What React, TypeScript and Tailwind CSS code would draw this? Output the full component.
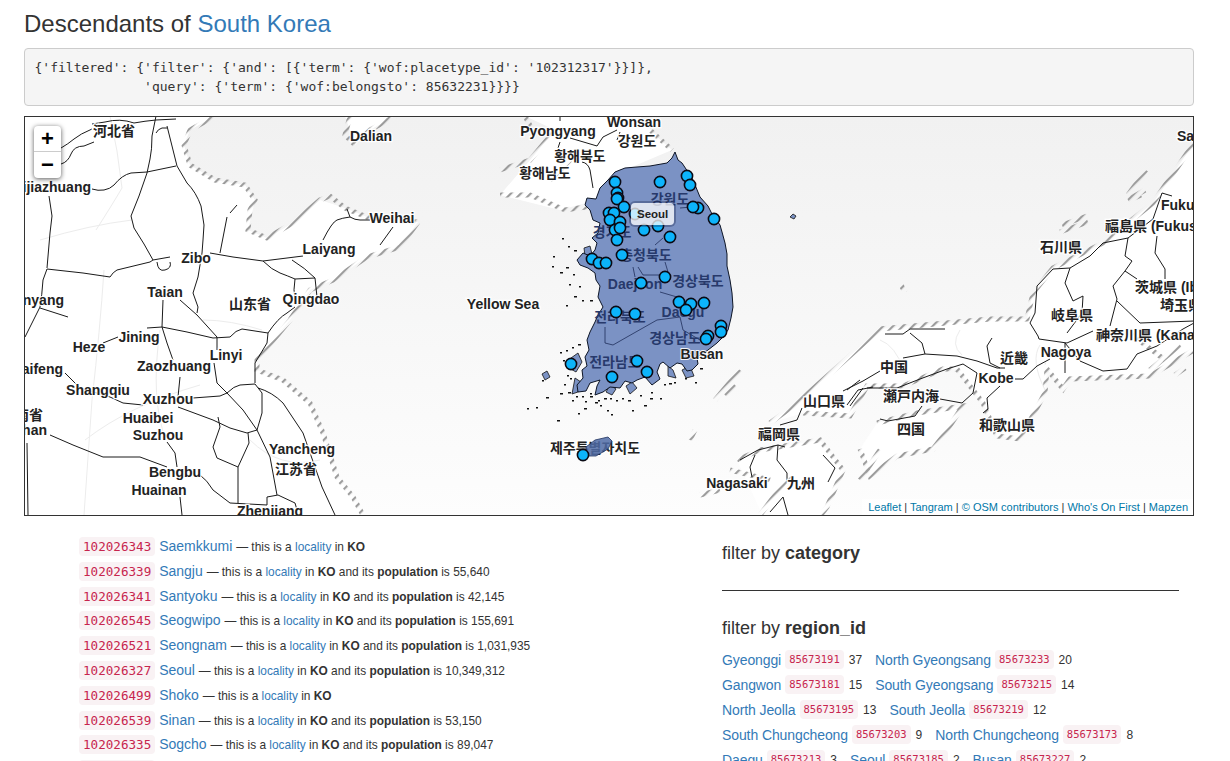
import React from "react"

type Label = [string, number, number, ("start" | "end")?]

const localities = [
    { id: "102026343", name: "Saemkkumi" },
    { id: "102026339", name: "Sangju", pop: "55,640" },
    { id: "102026341", name: "Santyoku", pop: "42,145" },
    { id: "102026545", name: "Seogwipo", pop: "155,691" },
    { id: "102026521", name: "Seongnam", pop: "1,031,935" },
    { id: "102026327", name: "Seoul", pop: "10,349,312" },
    { id: "102026499", name: "Shoko" },
    { id: "102026539", name: "Sinan", pop: "53,150" },
    { id: "102026335", name: "Sogcho", pop: "89,047" },
    { id: "102026347", name: "Songtan" },
]

const regions = [
    [["Gyeonggi", "85673191", "37"], ["North Gyeongsang", "85673233", "20"]],
    [["Gangwon", "85673181", "15"], ["South Gyeongsang", "85673215", "14"]],
    [["North Jeolla", "85673195", "13"], ["South Jeolla", "85673219", "12"]],
    [["South Chungcheong", "85673203", "9"], ["North Chungcheong", "85673173", "8"]],
    [["Daegu", "85673213", "3"], ["Seoul", "85673185", "2"], ["Busan", "85673227", "2"]],
]

const landLabels: Label[] = [
    ["河北省", 114, 131], ["Dalian", 371, 136], ["Pyongyang", 558, 131], ["Wonsan", 634, 122],
    ["강원도", 637, 141], ["황해북도", 580, 156], ["황해남도", 545, 173], ["Sa", 1177, 136, "start"],
    ["Shijiazhuang", 91, 187, "end"], ["Weihai", 392, 218], ["Fukushima", 1161, 205, "start"],
    ["福島県 (Fukushima)", 1105, 226, "start"], ["Zibo", 196, 258], ["Laiyang", 329, 249], ["石川県", 1061, 247],
    ["山东省", 250, 304], ["Qingdao", 311, 299], ["Yellow Sea", 503, 304], ["Anyang", 64, 300, "end"],
    ["Taian", 165, 292], ["Jining", 139, 337], ["Heze", 89, 347], ["Linyi", 226, 355], ["Zaozhuang", 174, 366],
    ["Kaifeng", 63, 369, "end"], ["Shangqiu", 98, 390], ["Xuzhou", 168, 399], ["Huaibei", 148, 418],
    ["Suzhou", 158, 435], ["河南省", 43, 415, "end"], ["Wuhan", 47, 430, "end"], ["Yancheng", 302, 449],
    ["江苏省", 296, 469], ["Bengbu", 175, 472], ["Huainan", 159, 490], ["Zhenjiang", 270, 511],
    ["山口県", 824, 401], ["瀬戸内海", 911, 396], ["中国", 894, 367], ["四国", 911, 429], ["和歌山県", 1007, 425],
    ["近畿", 1014, 358], ["Kobe", 996, 378], ["Nagoya", 1066, 352], ["岐阜県", 1072, 315],
    ["神奈川県 (Kanagawa)", 1096, 335, "start"], ["茨城県 (Ibaraki)", 1135, 287, "start"], ["埼玉県", 1160, 305, "start"],
    ["福岡県", 779, 434], ["Nagasaki", 737, 483], ["九州", 801, 483], ["제주특별자치도", 595, 448],
]

const koreaLabels: Label[] = [
    ["강원도", 670, 199], ["경기도", 612, 232], ["충청북도", 646, 255], ["Daejeon", 635, 284], ["경상북도", 698, 281],
    ["전라북도", 620, 317], ["Daegu", 683, 312], ["경상남도", 675, 338], ["전라남도", 615, 362],
]

const roads = [
    "M61 148Q68 144 74 139T92 129", "M92 124L105 122Q120 118 134 123Q145 121 156 120L176 119", "M61 164Q68 162 71 154T84 146L94 142",
    "M92 189Q98 191 104 190T114 185Q122 175 131 173L147 172L176 166", "M156 116L152 136Q152 150 150 159L147 173L139 196L131 216L134 228L144 244L153 260",
    "M153 260L150 262L117 270Q113 272 110 277L83 273L47 269L43 280Q42 295 40 307L30 327L25 337", "M40 308L68 317",
    "M167 126L177 166L187 183Q196 192 201 206L204 225L203 240L202 253L198 277L193 293L198 307L197 313", "M156 133Q158 129 162 128L167 128",
    "M49 196L52 216L50 233L47 268", "M153 260L170 257M210 253L233 257L263 261L303 256", "M263 261Q272 270 280 273T295 279L315 278",
    "M292 260Q305 268 315 278L317 297", "M295 279Q293 290 295 300", "M227 217L220 253", "M237 205L230 213", "M157 262Q158 272 165 270T170 262",
    "M347 209L350 217Q342 218 337 220T323 240", "M350 217Q355 220 360 220L370 220", "M393 227L380 245", "M163 300L162 327L167 343L173 360",
    "M180 377L178 397", "M180 300L197 315L217 337L217 350", "M147 328L162 327L187 332L213 338L230 337Q236 330 242 329L268 333L267 343L255 363L255 383",
    "M268 333Q278 318 287 313L295 307", "M118 337L103 343", "M214 363L217 383L227 393Q234 386 240 385L255 384L262 393L262 413L257 430",
    "M193 398L220 396L227 393L243 410L257 430L270 457L277 495", "M65 373L80 388L110 397L123 403L143 405",
    "M178 407L213 420L230 428L247 433L257 430", "M218 417L220 427L213 447L217 458L238 467L238 503", "M248 433L249 443L238 467",
    "M50 435L73 445L103 457L140 457L167 467", "M167 442L175 453L177 467", "M200 475Q207 480 213 490L230 503L267 505L267 497L278 495L295 503L297 510",
    "M258 388Q272 392 283 403L303 433L322 487L335 515", "M180 497L182 515", "M27 443L28 515",
    "M570 138L597 146L603 137L617 130", "M560 142L558 148", "M582 162Q588 163 590 170L593 188", "M617 140L620 132", "M560 116L560 121",
    "M885 334L903 334L910 329L945 329", "M910 333L922 343L925 354", "M903 358L925 354L957 356L977 361L997 368L1005 368",
    "M880 371L863 381L843 391", "M863 388L850 406", "M867 388L897 388L920 379L947 369L963 364L977 373L973 393L962 403L940 399",
    "M922 406L915 416L888 421L880 419", "M992 338L987 346L990 363L1000 368", "M1030 323L1038 336L1039 339L1067 343L1093 331",
    "M1037 286L1035 313L1030 323", "M1037 286L1053 269L1070 268L1090 256L1103 243L1128 238L1153 219L1162 193L1172 196",
    "M1070 268L1065 283L1073 301L1083 296L1082 313L1067 333", "M1128 238L1125 256L1132 261L1125 271L1113 286L1117 299L1110 326",
    "M1117 301L1140 323L1194 321", "M1157 236L1155 253L1165 269L1165 279", "M1125 271L1137 279",
    "M1194 323L1183 329L1157 346L1137 354L1127 369L1103 371L1080 361L1065 343L1065 373", "M1050 359L1037 366L1023 379L1015 379",
    "M1000 386L987 398L988 409L983 413", "M780 425L797 420L802 408", "M740 460L758 450L778 445L785 447", "M778 445L777 460L787 473L787 480",
    "M755 455L750 467L752 477", "M783 497L788 515", "M783 497L770 512", "M823 455L835 468L828 482", "M847 405L858 390L873 387", "M847 390L860 380",
]

// faint province borders on the land
const borders = [
    "M110 116Q118 150 122 188Q112 205 96 230M40 240Q90 225 132 220M104 270Q100 330 92 400L84 515",
    "M203 320Q230 320 262 330M160 330Q150 400 166 440M85 440Q130 405 200 385M250 440Q280 470 320 460",
    "M880 340Q895 345 905 372M960 330Q950 345 962 355M1040 345Q1030 360 1045 390",
]

// coast lines painted with the diagonal hatch pattern
const hatched = [
    "M215 116L190 130L184 145L190 165L215 180L245 185L255 200L250 210L248 230L267 238L293 223L320 200L330 196L345 208L367 217L385 220L418 222",
    "M418 222L400 247L367 257L333 280L310 290L290 320L257 360L257 370L283 380L310 403L323 433L337 477L353 497L363 515",
    "M350 116L345 135L355 145", "M395 116L370 130L355 145", "M500 170L530 160L555 130M500 195L530 195L565 210L600 205",
    "M525 116L535 135M550 180L570 160", "M650 130L672 150",
    "M770 423L797 403L880 329L990 319L1027 319L1033 293L1053 268L1103 243L1153 203L1194 143",
    "M1194 350L1150 376L1070 379L1063 389L1047 369L1045 393L1020 439L997 436L983 403L957 369L943 369L903 386L867 386L850 416L803 413",
    "M877 423L917 413L963 406L943 436L933 449L897 456L870 476L860 449", "M737 460L760 450L820 440L843 470L827 507L820 516",
    "M1146 170L1128 195M1128 200L1145 190M1130 200L1141 195", "M1062 225L1087 216", "M1060 232L1088 222",
    "M901 285L905 292", "M725 395L735 385M715 400L740 370", "M760 515L790 475M730 470L770 480M700 495L720 490M690 440L695 430",
    "M880 450L860 480", "M1132 335L1165 360", "M1150 370L1180 345", "M1175 375L1185 368",
]

const land = [
    "M24 116L215 116L190 130L184 145L190 165L215 180L245 185L255 200L248 230L267 238L293 223L320 200L345 208L367 217L418 222L400 247L367 257L333 280L310 290L290 320L257 360L257 370L283 380L310 403L323 433L337 477L353 497L363 516L24 516Z",
    "M345 116L395 116L370 130L355 145Z",
    "M525 116L640 116L655 135L672 150L620 172L597 200L560 210L500 195L530 160L555 130Z",
    "M770 423L797 403L880 329L990 319L1027 319L1033 293L1053 268L1103 243L1153 203L1194 143L1194 350L1150 376L1070 379L1063 389L1047 369L1045 393L1020 439L997 436L983 403L957 369L943 369L903 386L867 386L850 416L803 413Z",
    "M877 423L917 413L963 406L943 436L933 449L897 456L870 476L860 449Z",
    "M737 460L760 450L820 440L843 470L827 507L820 516L763 516Z",
]

const korea =
    "M675 152L678 160L682 163L688 172L693 180L700 197L708 206L712 214L720 225L722 232L725 243L727 254L727 266L730 280L732 293L733 307L731 318L728 330L722 338L717 343L708 350L697 358L698 364L692 370L687 371L682 364L677 363L670 368L663 362L660 364L657 372L660 379L652 385L645 377L637 380L632 383L625 381L620 388L610 387L603 392L595 395L597 386L600 380L590 383L586 391L578 392L577 385L583 378L582 370L587 366L585 357L589 350L587 340L590 332L595 322L598 315L603 307L600 301L598 297L600 286L596 280L595 273L588 268L580 265L577 260L583 253L590 256L595 250L597 243L592 238L598 233L600 223L593 220L590 210L585 205L587 198L596 199L600 188L608 180L615 172L625 168L637 167L650 166L667 163L672 158Z"

const islands = [
    "M571 358L578 353L582 362L576 372L569 368Z", "M575 378L581 382L578 392L572 394Z", "M542 374L547 371L550 377L545 380Z",
    "M600 373L606 368L609 376L603 383Z", "M626 386L632 382L637 388L630 394Z", "M668 366L673 370L676 378L668 376Z",
    "M793 214L796 216L794 219L790 217Z", "M588 372L594 368L596 378L590 382Z", "M610 385L616 389L612 395L606 392Z",
    "M632 372L640 368L642 376L635 380Z", "M682 370L690 366L694 376L686 378Z", "M584 248L590 246L592 254L585 256Z",
]

const specks = [
    [566, 267], [573, 274], [579, 286], [560, 272], [569, 284], [552, 266], [574, 296], [582, 300], [566, 305], [590, 300],
    [562, 238], [568, 246], [574, 250], [553, 256], [542, 380], [546, 397], [536, 407], [527, 408], [560, 393], [572, 400],
    [585, 401], [595, 402], [600, 405], [610, 398], [628, 400], [640, 395], [567, 375], [584, 408], [607, 410], [578, 413],
    [557, 420], [611, 414], [632, 410], [644, 405], [651, 392], [660, 398], [669, 383], [685, 378], [695, 382], [700, 368],
    [566, 350], [572, 347], [578, 344], [570, 378], [564, 384], [568, 392], [576, 396], [582, 396], [590, 396], [598, 400],
    [590, 393], [604, 398], [616, 400], [622, 398], [655, 378], [664, 384], [674, 382], [650, 398], [560, 352], [563, 360],
]

const markers = [
    [615, 182], [660, 182], [687, 176], [690, 185], [617, 193], [618, 198], [617, 199], [624, 207], [609, 213], [614, 213],
    [635, 214], [610, 220], [620, 222], [615, 230], [620, 228], [644, 230], [658, 226], [670, 237], [617, 240], [698, 208],
    [693, 207], [714, 219], [622, 255], [592, 259], [599, 263], [606, 263], [665, 277], [641, 283], [679, 302], [691, 304],
    [704, 303], [686, 310], [616, 312], [635, 314], [721, 326], [721, 332], [708, 336], [706, 339], [637, 361], [647, 372],
    [612, 377], [571, 364], [583, 455],
]

const KoreaMap = () => (
    <svg viewBox="25 117 1168 398" className="block w-full h-full">
        <defs>
            <pattern id="hatch" width="7" height="7" patternUnits="userSpaceOnUse" patternTransform="rotate(-45)">
                <rect width="7" height="2.2" fill="#9c9c9c" />
            </pattern>
        </defs>
        {land.map((d, i) => <path key={i} d={d} fill="#fff" />)}
        {borders.map((d, i) => <path key={i} d={d} fill="none" stroke="#ececec" strokeWidth="1" />)}
        {hatched.map((d, i) => <path key={i} d={d} fill="none" stroke="url(#hatch)" strokeWidth="5" />)}
        {roads.map((d, i) => <path key={i} d={d} fill="none" stroke="#1a1a1a" strokeWidth="1" strokeLinejoin="round" />)}
        {landLabels.map(([text, x, y, anchor], i) => (
            <text key={i} x={x} y={y} textAnchor={anchor || "middle"} dominantBaseline="central" className="fill-[#222] stroke-white/90 stroke-[2.5px] [paint-order:stroke] text-[14px] font-bold">{text}</text>
        ))}
        {islands.map((d, i) => <path key={i} d={d} fill="#7b92c4" stroke="#111" strokeWidth="0.8" />)}
        {specks.map(([x, y], i) => <rect key={i} x={x} y={y} width={i % 3 === 0 ? 3 : 2} height="1.5" fill="#111" />)}
        <path d={korea} fill="#7b92c4" stroke="#0d1526" strokeWidth="1" />
        {/* Jeju sits over its label, which shows through */}
        <path d="M586 447L595 440L608 437L612 441L608 449L596 456L587 456Z" fill="#4f6ba6" fillOpacity="0.85" stroke="#22345f" strokeWidth="0.8" />
        <path d="M605 327L605 343L613 345L627 337L657 320L680 317L683 330L700 340M633 267L635 277M638 267L643 275L663 275M680 208L692 207M655 245L663 238M665 262L668 272M660 292L677 297" fill="none" stroke="#1f2f5a" strokeWidth="0.8" />
        {koreaLabels.map(([text, x, y], i) => (
            <text key={i} x={x} y={y} textAnchor="middle" dominantBaseline="central" className="fill-[#27396b] text-[14px] font-bold">{text}</text>
        ))}
        <text x="702" y="354" textAnchor="middle" dominantBaseline="central" className="fill-[#222] stroke-white/90 stroke-[2px] [paint-order:stroke] text-[14px] font-bold">Busan</text>
        {markers.map(([x, y], i) => <circle key={i} cx={x} cy={y} r="5.6" fill="#0cb4fb" stroke="#0a0a14" strokeWidth="1.6" />)}
    </svg>
)

const Code = ({ children, className }: { children: React.ReactNode; className: string }) => (
    <code className={`font-['DejaVu_Sans_Mono',monospace] text-[#c7254e] bg-[#f9f2f4] rounded px-1 py-0.5 ${className}`}>{children}</code>
)

export default function App() {
    return (
        <div className="h-screen overflow-hidden bg-white text-[#333] text-sm font-['Liberation_Sans','Noto_Sans_CJK_KR','Noto_Sans_CJK_SC',sans-serif]">
            <div className="ml-6 w-[1170px]">
                <h1 className="text-[24px] leading-[26px] pt-[11px] text-[#333]">
                    Descendants of <a className="text-[#337ab7]">South Korea</a>
                </h1>
                <pre className="mt-[11px] h-[58px] px-[9.5px] pt-[10px] bg-[#f5f5f5] border border-[#ccc] rounded text-[13px] leading-[18.5px] font-['DejaVu_Sans_Mono',monospace]">{`{'filtered': {'filter': {'and': [{'term': {'wof:placetype_id': '102312317'}}]},
              'query': {'term': {'wof:belongsto': 85632231}}}}`}</pre>
                <div className="relative mt-[10px] h-[400px] border border-[#333] overflow-hidden bg-gradient-to-b from-[#f1f1f1] to-[#fdfdfd]">
                    <KoreaMap />
                    <div className="absolute left-[9px] top-[9px] w-[27px] bg-white rounded shadow-[0_1px_5px_rgba(0,0,0,0.65)] text-black font-bold text-center">
                        <div className="h-[26px] leading-[26px] text-[22px] border-b border-[#ccc]">+</div>
                        <div className="h-[26px] leading-[25px] text-[22px]">−</div>
                    </div>
                    <div className="absolute left-[606px] top-[86px] h-[22px] px-[6px] leading-[22px] bg-white/75 rounded-sm text-[11.5px] font-bold text-[#222] shadow-[0_0_0_2px_rgba(30,40,80,0.35)]">Seoul</div>
                    <div className="absolute right-0 bottom-0 h-[16px] pl-[6px] pr-[5px] leading-[16px] bg-white/80 text-[11px] text-[#333] whitespace-nowrap">
                        <a className="text-[#0078a8]">Leaflet</a> | <a className="text-[#0078a8]">Tangram</a> | <a className="text-[#0078a8]">© OSM contributors</a> | <a className="text-[#0078a8]">Who's On First</a> | <a className="text-[#0078a8]">Mapzen</a>
                    </div>
                </div>
            </div>
            <div className="flex pt-[18px]">
                <ul className="w-[722px] pl-[79px]">
                    {localities.map((l) => (
                        <li key={l.id} className="h-[24.8px] leading-[24px] whitespace-nowrap">
                            <Code className="text-[12.6px]">{l.id}</Code>{" "}
                            <a className="text-[#337ab7]">{l.name}</a>{" "}
                            <span className="text-[11.9px]">
                                — this is a <a className="text-[#337ab7]">locality</a> in <b>KO</b>
                                {l.pop && <> and its <b>population</b> is {l.pop}</>}
                            </span>
                        </li>
                    ))}
                </ul>
                <div className="w-[457px]">
                    <h4 className="mt-[9px] text-lg leading-5">filter by <b>category</b></h4>
                    <hr className="mt-[27px] border-t border-[#333]" />
                    <h4 className="mt-[27px] text-lg leading-5">filter by <b>region_id</b></h4>
                    <div className="mt-[9px]">
                        {regions.map((row, i) => (
                            <div key={i} className="flex h-[25px] items-center gap-[13px] whitespace-nowrap">
                                {row.map(([name, id, count]) => (
                                    <span key={id} className="flex items-center gap-1">
                                        <a className="text-[#337ab7] tracking-[-0.1px]">{name}</a>
                                        <Code className="text-[10.5px]">{id}</Code>
                                        <span className="text-xs ml-px">{count}</span>
                                    </span>
                                ))}
                            </div>
                        ))}
                    </div>
                </div>
            </div>
        </div>
    )
}
